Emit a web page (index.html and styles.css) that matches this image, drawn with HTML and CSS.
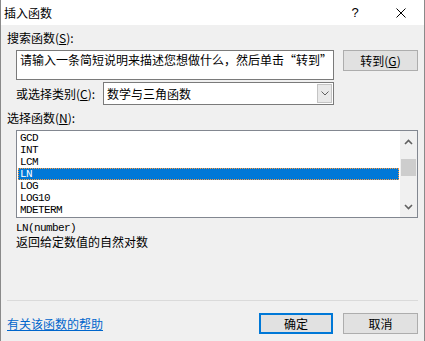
FILE: index.html
```html
<!DOCTYPE html>
<html lang="zh-CN">
<head>
  <meta charset="UTF-8">
  <title>插入函数</title>
  <link rel="stylesheet" href="styles.css">
</head>
<body>
  <div class="dialog">
    <div class="titlebar">
      <span class="title">插入函数</span>
      <span class="caption-btn">?</span>
      <span class="caption-btn">
        <svg width="10" height="10" viewBox="0 0 10 10"><path d="M0.5 0.5L9.5 9.5M9.5 0.5L0.5 9.5" stroke="#000" stroke-width="1" fill="none"/></svg>
      </span>
    </div>

    <div class="content">
      <div class="label">搜索函数(<u>S</u>):</div>
      <div class="search-row">
        <div class="search-box">请输入一条简短说明来描述您想做什么，然后单击“转到”</div>
        <button class="btn">转到(<u>G</u>)</button>
      </div>

      <div class="cat-row">
        <span class="cat-label">或选择类别(<u>C</u>):</span>
        <div class="select">
          <span class="select-text">数学与三角函数</span>
          <span class="select-arrow">
            <svg width="8" height="5" viewBox="0 0 8 5"><path d="M0.5 0.5L4 4L7.5 0.5" stroke="#606060" fill="none"/></svg>
          </span>
        </div>
      </div>

      <div class="label list-label">选择函数(<u>N</u>):</div>
      <div class="listbox">
        <ul class="items">
          <li>GCD</li>
          <li>INT</li>
          <li>LCM</li>
          <li class="selected">LN</li>
          <li>LOG</li>
          <li>LOG10</li>
          <li>MDETERM</li>
        </ul>
        <div class="scrollbar">
          <svg class="sb-arrow up" width="9" height="6" viewBox="0 0 9 6"><path d="M1 5L4.5 1.5L8 5" stroke="#606060" stroke-width="1.6" fill="none"/></svg>
          <div class="sb-thumb"></div>
          <svg class="sb-arrow down" width="9" height="6" viewBox="0 0 9 6"><path d="M1 1L4.5 4.5L8 1" stroke="#606060" stroke-width="1.6" fill="none"/></svg>
        </div>
      </div>

      <div class="signature">LN(number)</div>
      <div class="desc">返回给定数值的自然对数</div>

      <div class="separator"></div>
      <div class="footer">
        <a class="help-link" href="#">有关该函数的帮助</a>
        <button class="btn default">确定</button>
        <button class="btn">取消</button>
      </div>
    </div>
  </div>
</body>
</html>
```

FILE: styles.css
```css
body { margin: 0; padding: 0; background: #f0f0f0; font-family: "Noto Sans CJK SC", "Noto Sans", sans-serif; font-size: 12px; color: #000; }
u { text-decoration-thickness: 1px; text-underline-offset: 1px; }

.dialog { width: 425px; height: 341px; box-sizing: border-box; border-left: 1px solid #8a8a8a; border-right: 1px solid #8a8a8a; display: flex; flex-direction: column; background: #f0f0f0; }

.titlebar { height: 25px; background: #fff; display: flex; align-items: center; flex-shrink: 0; }
.title { flex: 1; padding-left: 3px; line-height: 14px; }
.caption-btn { width: 46px; height: 25px; display: flex; align-items: center; justify-content: center; font-family: "Liberation Sans", sans-serif; font-size: 13px; }

.content { flex: 1; display: flex; flex-direction: column; padding: 0 6px 7px 6px; }
.label { line-height: 14px; margin-top: 6px; }
.list-label { margin-top: 6px; }

.search-row { display: flex; align-items: flex-start; margin-top: 5px; margin-left: 9px; gap: 9px; }
.search-box { width: 318px; height: 30px; box-sizing: border-box; border: 1px solid #7a7a7a; background: #fff; padding: 2px 3px; line-height: 14px; }

.btn { font-family: inherit; font-size: 12px; color: #000; background: #e1e1e1; border: 1px solid #adadad; height: 21px; width: 75px; padding: 0; margin: 0; line-height: 17px; box-sizing: border-box; }
.btn.default { border: 2px solid #0078d7; width: 74px; line-height: 15px; }

.cat-row { display: flex; align-items: center; margin-top: 2px; margin-left: 9px; }
.cat-label { width: 87px; line-height: 14px; }
.select { width: 231px; height: 23px; box-sizing: border-box; border: 1px solid #7a7a7a; background: #fff; display: flex; align-items: center; }
.select-text { flex: 1; padding-left: 3px; line-height: 14px; }
.select-arrow { width: 15px; height: 19px; margin-right: 1px; box-sizing: border-box; border: 1px solid #c4c4c4; background: #e9e9e9; display: flex; align-items: center; justify-content: center; }

.listbox { margin-top: 5px; margin-left: 9px; height: 88px; box-sizing: border-box; border: 1px solid #828790; background: #fff; display: flex; }
.items { flex: 1; list-style: none; margin: 0; padding: 1px 1px 0 1px; font-family: "Liberation Mono", monospace; font-size: 11px; letter-spacing: -0.6px; }
.items li { height: 12px; line-height: 12px; padding-left: 2px; box-sizing: border-box; }
.items li.selected { background: #0078d7; color: #fff; border: 1px dotted #ff9a3c; line-height: 10px; padding-left: 1px; }

.scrollbar { width: 17px; background: #f0f0f0; display: flex; flex-direction: column; align-items: center; }
.sb-arrow.up { margin-top: 8px; }
.sb-thumb { width: 15px; height: 17px; background: #cdcdcd; margin-top: 14px; }
.sb-arrow.down { margin-top: auto; margin-bottom: 7px; }

.signature { margin-top: 3px; line-height: 14px; margin-left: 9px; font-family: "Liberation Mono", monospace; font-size: 11px; letter-spacing: -0.6px; }
.desc { line-height: 14px; margin-left: 9px; }

.separator { margin-top: auto; height: 1px; background: #dadada; }
.footer { display: flex; align-items: center; margin-top: 12px; gap: 10px; }
.help-link { flex: 1; color: #0066cc; text-decoration: underline; line-height: 14px; }
```
